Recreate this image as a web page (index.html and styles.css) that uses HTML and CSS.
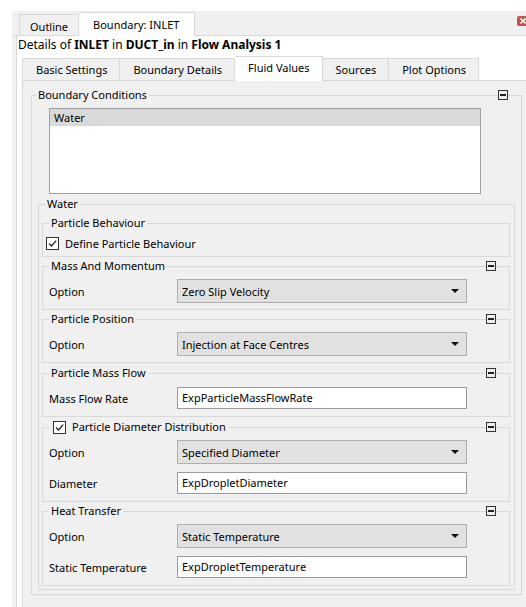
FILE: index.html
```html
<!DOCTYPE html>
<html lang="en">
<head>
<meta charset="utf-8">
<title>Boundary: INLET</title>
<link rel="stylesheet" href="styles.css">
</head>
<body>
<div class="window">
  <div class="doc-tabs">
    <div class="doc-tab">Outline</div>
    <div class="doc-tab active">Boundary: INLET</div>
    <span class="close" title="Close">
      <svg width="12" height="10" viewBox="0 0 12 10"><rect x="0" y="0" width="12" height="10" rx="2" fill="#c75050"/><path d="M3.5 2.5 L8.5 7.5 M8.5 2.5 L3.5 7.5" stroke="#fff" stroke-width="1.6"/></svg>
    </span>
  </div>
  <div class="doc-body">
    <div class="details">Details of <b>INLET</b> in <b>DUCT_in</b> in <b>Flow Analysis 1</b></div>
    <div class="tabs">
      <div class="tab">Basic Settings</div>
      <div class="tab">Boundary Details</div>
      <div class="tab active">Fluid Values</div>
      <div class="tab">Sources</div>
      <div class="tab">Plot Options</div>
    </div>
    <div class="panel">
      <fieldset class="group group-bc">
        <legend>Boundary Conditions</legend>
        <span class="collapse"></span>
        <div class="listbox">
          <div class="list-item selected">Water</div>
        </div>
        <fieldset class="group group-fluid">
          <legend>Water</legend>
          <div class="stack">
            <fieldset class="group sub">
              <legend>Particle Behaviour</legend>
              <label class="check-row">
                <span class="checkbox"><svg width="11" height="11" viewBox="0 0 11 11"><path d="M2 5.5 L4.5 8 L9.2 2.6" fill="none" stroke="#222" stroke-width="1.3"/></svg></span>
                Define Particle Behaviour
              </label>
            </fieldset>
            <fieldset class="group sub">
              <legend>Mass And Momentum</legend>
              <span class="collapse"></span>
              <div class="rows">
                <div class="row"><span>Option</span><div class="select"><span>Zero Slip Velocity</span><i class="arrow"></i></div></div>
              </div>
            </fieldset>
            <fieldset class="group sub">
              <legend>Particle Position</legend>
              <span class="collapse"></span>
              <div class="rows">
                <div class="row"><span>Option</span><div class="select"><span>Injection at Face Centres</span><i class="arrow"></i></div></div>
              </div>
            </fieldset>
            <fieldset class="group sub sub-spaced">
              <legend>Particle Mass Flow</legend>
              <span class="collapse"></span>
              <div class="rows">
                <div class="row"><span>Mass Flow Rate</span><div class="input">ExpParticleMassFlowRate</div></div>
              </div>
            </fieldset>
            <fieldset class="group sub sub-spaced">
              <legend class="check-legend">
                <span class="checkbox"><svg width="11" height="11" viewBox="0 0 11 11"><path d="M2 5.5 L4.5 8 L9.2 2.6" fill="none" stroke="#222" stroke-width="1.3"/></svg></span>
                Particle Diameter Distribution
              </legend>
              <span class="collapse"></span>
              <div class="rows">
                <div class="row"><span>Option</span><div class="select"><span>Specified Diameter</span><i class="arrow"></i></div></div>
                <div class="row"><span>Diameter</span><div class="input">ExpDropletDiameter</div></div>
              </div>
            </fieldset>
            <fieldset class="group sub">
              <legend>Heat Transfer</legend>
              <span class="collapse"></span>
              <div class="rows">
                <div class="row"><span>Option</span><div class="select"><span>Static Temperature</span><i class="arrow"></i></div></div>
                <div class="row"><span>Static Temperature</span><div class="input">ExpDropletTemperature</div></div>
              </div>
            </fieldset>
          </div>
        </fieldset>
      </fieldset>
    </div>
  </div>
</div>
</body>
</html>
```

FILE: styles.css
```css
* { box-sizing: border-box; }

html, body { margin: 0; }

body {
  width: 526px;
  height: 607px;
  overflow: hidden;
  background: #fff;
  color: #000;
  font-family: "Noto Sans", "Segoe UI", sans-serif;
  font-size: 11px;
}

/* outer window with the document tab strip */
.window {
  margin: 11px 0 0 12px;
  width: 518px;
  height: 600px;
  background: #f0f0f0;
  display: flex;
  flex-direction: column;
}

.doc-tabs {
  flex: none;
  height: 25px;
  display: flex;
  align-items: flex-end;
  padding-left: 7px;
  border-bottom: 1px solid #d9d9d9;
}

.doc-tab {
  height: 21px;
  padding: 3px 10px 0;
  line-height: 17px;
  border: 1px solid #d9d9d9;
  border-bottom: none;
  background: #f0f0f0;
  white-space: nowrap;
}

.doc-tab.active {
  height: 24px;
  margin-bottom: -1px;
  padding: 3px 15px 0 14px;
  background: #fff;
  border-left: none;
}

.close {
  margin: 5px 1px 0 auto;
  align-self: flex-start;
  display: flex;
}

/* white document area */
.doc-body {
  flex: 1;
  margin-left: 4px;
  border-left: 1px solid #d9d9d9;
  background: #fff;
  display: flex;
  flex-direction: column;
}

.details {
  height: 20px;
  padding: 1px 0 0 1px;
  line-height: 16px;
  font-size: 12px;
}

/* inner tab strip */
.tabs {
  flex: none;
  height: 24px;
  margin-left: 5px;
  display: flex;
  align-items: flex-end;
  position: relative;
  z-index: 1;
}

.tab {
  height: 22px;
  padding: 2px 12px 0 13px;
  line-height: 17px;
  border: 1px solid #d9d9d9;
  border-bottom: none;
  background: #f0f0f0;
  white-space: nowrap;
}

.tab + .tab { border-left: none; }

.tab.active {
  height: 25px;
  margin-bottom: -1px;
  background: #fff;
}

.panel {
  flex: 1;
  margin-left: 5px;
  padding: 6px 7px 0 8px;
  background: #f0f0f0;
  border: 1px solid #d9d9d9;
}

/* group boxes */
.group {
  position: relative;
  margin: 0;
  min-width: 0;
  border: 1px solid #d9d9d9;
}

.group legend {
  padding: 0 2px;
  line-height: 16px;
}

.group-bc { padding: 5px 4px 4px 4px; }

.group-fluid {
  margin: 2px 2px 0 2px;
  padding: 3px 4px 3px 3px;
}

.group-fluid > legend { margin-left: 3px; }

.stack {
  display: flex;
  flex-direction: column;
  gap: 1px;
}

.sub { padding: 5px 6px 6px 6px; }

.sub-spaced { margin-top: 1px; }

.collapse {
  position: absolute;
  right: 13px;
  top: -13px;
  width: 10px;
  height: 10px;
  border: 1px solid #333;
  background: #f0f0f0;
}

.collapse::after {
  content: "";
  position: absolute;
  left: 1px;
  right: 1px;
  top: 3px;
  height: 2px;
  background: #222;
}

.listbox {
  margin-left: 13px;
  width: 432px;
  height: 86px;
  border: 1px solid #a0a0a0;
  background: #fff;
}

.list-item {
  height: 17px;
  padding-left: 4px;
  line-height: 17px;
}

.list-item.selected { background: #d9d9d9; }

/* checkboxes */
.checkbox {
  flex: none;
  width: 13px;
  height: 13px;
  border: 1px solid #333;
  background: #fff;
  display: inline-flex;
  align-items: center;
  justify-content: center;
}

.check-row {
  height: 14px;
  margin-left: -3px;
  display: flex;
  align-items: center;
  gap: 6px;
}

.check-legend {
  display: flex;
  align-items: center;
  gap: 6px;
}

.check-legend .checkbox { margin-left: 2px; }

/* label / field rows */
.rows {
  display: flex;
  flex-direction: column;
  gap: 7px;
}

.row {
  height: 24px;
  display: grid;
  grid-template-columns: 128px 290px;
  align-items: center;
}

.select {
  height: 24px;
  padding: 0 7px 0 4px;
  border: 1px solid #adadad;
  background: #e1e1e1;
  display: flex;
  align-items: center;
  justify-content: space-between;
}

.arrow {
  width: 0;
  height: 0;
  border-left: 4px solid transparent;
  border-right: 4px solid transparent;
  border-top: 4px solid #111;
}

.input {
  height: 22px;
  padding: 0 4px;
  line-height: 20px;
  border: 1px solid #9a9a9a;
  background: #fff;
}
```
